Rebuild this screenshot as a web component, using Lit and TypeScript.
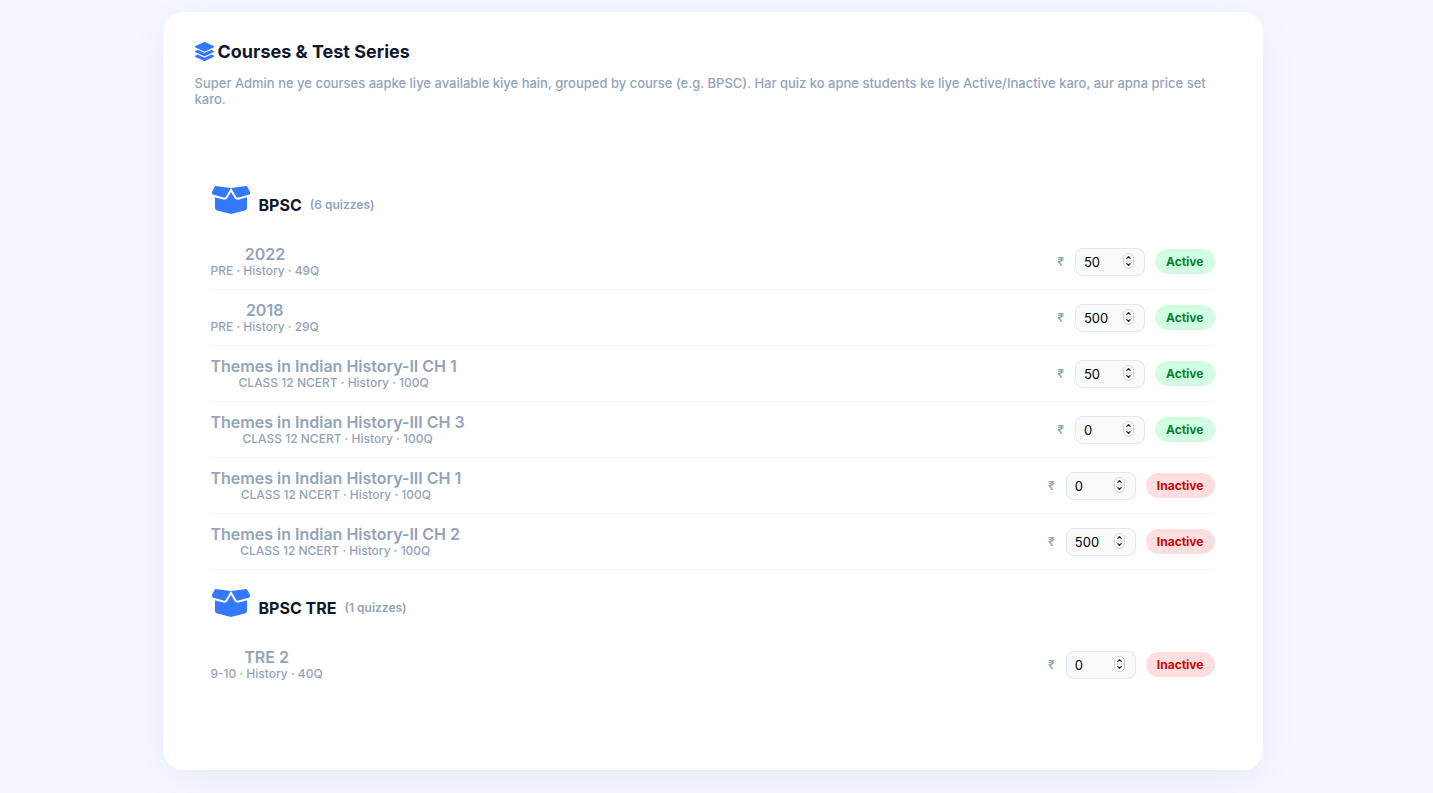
import { LitElement, html, css, svg } from "lit";
import { customElement, property } from "lit/decorators.js";

interface Quiz {
  title: string;
  detail: string;
  price: number;
  active: boolean;
}

interface Course {
  name: string;
  quizzes: Quiz[];
}

const COURSES: Course[] = [
  {
    name: "BPSC",
    quizzes: [
      { title: "2022", detail: "PRE · History · 49Q", price: 50, active: true },
      { title: "2018", detail: "PRE · History · 29Q", price: 500, active: true },
      { title: "Themes in Indian History-II CH 1", detail: "CLASS 12 NCERT · History · 100Q", price: 50, active: true },
      { title: "Themes in Indian History-III CH 3", detail: "CLASS 12 NCERT · History · 100Q", price: 0, active: true },
      { title: "Themes in Indian History-III CH 1", detail: "CLASS 12 NCERT · History · 100Q", price: 0, active: false },
      { title: "Themes in Indian History-II CH 2", detail: "CLASS 12 NCERT · History · 100Q", price: 500, active: false },
    ],
  },
  {
    name: "BPSC TRE",
    quizzes: [{ title: "TRE 2", detail: "9-10 · History · 40Q", price: 0, active: false }],
  },
];

const layersPath = svg`<path d="M12.41 148.02l232.94 105.67c6.8 3.09 14.49 3.09 21.29 0l232.94-105.67c16.55-7.51 16.55-32.52 0-40.03L266.65 2.31a25.607 25.607 0 0 0-21.29 0L12.41 107.98c-16.55 7.51-16.55 32.53 0 40.04zm487.18 88.28l-58.09-26.33-161.64 73.27c-7.56 3.43-15.59 5.17-23.86 5.17s-16.29-1.74-23.86-5.17L70.51 209.97l-58.1 26.33c-16.55 7.5-16.55 32.5 0 40l232.94 105.59c6.8 3.08 14.49 3.08 21.29 0L499.59 276.3c16.55-7.5 16.55-32.5 0-40zm0 127.8l-57.87-26.23-161.86 73.37c-7.56 3.43-15.59 5.17-23.86 5.17s-16.29-1.74-23.86-5.17L70.29 337.87 12.41 364.1c-16.55 7.5-16.55 32.5 0 40l232.94 105.59c6.8 3.08 14.49 3.08 21.29 0L499.59 404.1c16.55-7.5 16.55-32.5 0-40z"/>`;

const boxPath = svg`<path d="M58.9 42.1c3-6.1 9.6-9.6 16.3-8.7L320 64 564.8 33.4c6.7-.8 13.3 2.7 16.3 8.7l41.7 83.4c9 17.9-.6 39.6-19.8 45.1L439.6 217.3c-13.9 4-28.8-1.9-36.2-14.3L320 64 236.6 203c-7.4 12.4-22.3 18.3-36.2 14.3L37.1 170.6c-19.3-5.5-28.8-27.2-19.8-45.1L58.9 42.1zM321.1 128l54.9 91.4c14.9 24.8 44.6 36.6 72.5 28.6L576 211.6l0 167c0 22-15 41.2-36.4 46.6l-204.1 51c-10.2 2.6-20.9 2.6-31 0l-204.1-51C79 419.7 64 400.5 64 378.5l0-167L191.6 248c27.8 8 57.6-3.8 72.5-28.6L318.9 128l2.2 0z"/>`;

@customElement("quiz-row")
export class QuizRow extends LitElement {
  @property({ attribute: false }) quiz!: Quiz;

  static styles = css`
    :host {
      display: flex;
      align-items: center;
      justify-content: space-between;
      gap: 16px;
      padding: 11px 0;
      border-bottom: 1px solid #f1f5f9;
    }
    .info {
      text-align: center;
    }
    .title {
      font-size: 16px;
      line-height: 19px;
      font-weight: 600;
    }
    .detail {
      font-size: 12px;
      line-height: 14px;
      font-weight: 500;
    }
    .controls {
      display: flex;
      align-items: center;
      gap: 10px;
    }
    .price {
      display: flex;
      align-items: center;
      gap: 11px;
      font-size: 12px;
      font-weight: 600;
    }
    .field {
      position: relative;
      display: flex;
    }
    .amount {
      box-sizing: border-box;
      width: 70px;
      height: 28px;
      margin: 0;
      padding: 0 24px 0 8px;
      border: 1px solid #e2e8f0;
      border-radius: 8px;
      background: #f8fafc;
      color: #000;
      font: 400 13px Inter, sans-serif;
      appearance: textfield;
    }
    .amount::-webkit-inner-spin-button {
      appearance: none;
    }
    .stepper {
      position: absolute;
      top: 5px;
      right: 10px;
      pointer-events: none;
    }
    .status {
      height: 25px;
      padding: 0 11px;
      border: 0;
      border-radius: 13px;
      font: 700 12px Inter, sans-serif;
      cursor: pointer;
    }
    .active {
      background: #d1fee3;
      color: #068035;
    }
    .inactive {
      background: #fedede;
      color: #c40606;
    }
  `;

  private toggle() {
    this.quiz = { ...this.quiz, active: !this.quiz.active };
  }

  render() {
    const { title, detail, price, active } = this.quiz;
    return html`
      <div class="info">
        <div class="title">${title}</div>
        <div class="detail">${detail}</div>
      </div>
      <div class="controls">
        <div class="price">
          <label for="amount" aria-label="Price in rupees">₹</label>
          <span class="field">
            <input class="amount" id="amount" type="number" min="0" .value=${String(price)} />
            <svg class="stepper" width="13" height="16" viewBox="0 0 13 16" fill="none" aria-hidden="true">
              <rect x="1.5" y=".5" width="10" height="15" rx="4.5" fill="#fff" stroke="#d2d3d5" />
              <path d="M2 8h9" stroke="#d8d9db" />
              <path d="M4.8 5.4l1.7-1.6 1.7 1.6M4.8 10.6l1.7 1.6 1.7-1.6" stroke="#222" stroke-width="1.3" stroke-linecap="round" stroke-linejoin="round" />
            </svg>
          </span>
        </div>
        <button class="status ${active ? "active" : "inactive"}" type="button" @click=${this.toggle}>
          ${active ? "Active" : "Inactive"}
        </button>
      </div>
    `;
  }
}

@customElement("app-root")
export class AppRoot extends LitElement {
  static styles = css`
    :host {
      display: block;
      box-sizing: border-box;
      min-height: 100vh;
      padding: 12px 28px 23px 20px;
      background: #f4f7ff;
      color: #94a3b8;
      font-family: Inter, sans-serif;
    }
    .card {
      box-sizing: border-box;
      max-width: 1100px;
      margin: 0 auto;
      padding: 28px 32px 62px;
      border-radius: 20px;
      background: #fff;
      box-shadow: 0 10px 40px rgba(0, 0, 0, 0.05);
    }
    .heading {
      display: flex;
      align-items: center;
      gap: 4px;
      margin: 0 0 12px;
      color: #0f172a;
      font-size: 18px;
      line-height: 23px;
      font-weight: 700;
    }
    .layers,
    .box {
      flex: none;
      fill: #3478ff;
    }
    .intro {
      margin: 0;
      padding-right: 16px;
      font-size: 13px;
      line-height: 16px;
      font-weight: 500;
    }
    .courses {
      padding: 60px 16px 16px;
    }
    .course-name {
      display: flex;
      align-items: flex-end;
      gap: 8px;
      margin: 0;
      padding: 17px 0 18px;
      color: #0f172a;
      font-size: 16px;
      line-height: 22px;
      font-weight: 700;
    }
    .count {
      color: #94a3b8;
      font-size: 12px;
      font-weight: 600;
    }
    .course:last-child quiz-row:last-child {
      border-bottom: 0;
    }
  `;

  render() {
    return html`
      <main class="card">
        <h1 class="heading">
          <svg class="layers" width="19" height="19" viewBox="0 0 512 512" aria-hidden="true">${layersPath}</svg>
          Courses &amp; Test Series
        </h1>
        <p class="intro">
          Super Admin ne ye courses aapke liye available kiye hain, grouped by course (e.g. BPSC). Har quiz ko apne
          students ke liye Active/Inactive karo, aur apna price set karo.
        </p>
        <div class="courses">
          ${COURSES.map(
            (course) => html`
              <section class="course">
                <h2 class="course-name">
                  <svg class="box" width="40" height="32" viewBox="0 0 640 512" aria-hidden="true">${boxPath}</svg>
                  ${course.name}
                  <span class="count">(${course.quizzes.length} quizzes)</span>
                </h2>
                ${course.quizzes.map((quiz) => html`<quiz-row .quiz=${quiz}></quiz-row>`)}
              </section>
            `,
          )}
        </div>
      </main>
    `;
  }
}
